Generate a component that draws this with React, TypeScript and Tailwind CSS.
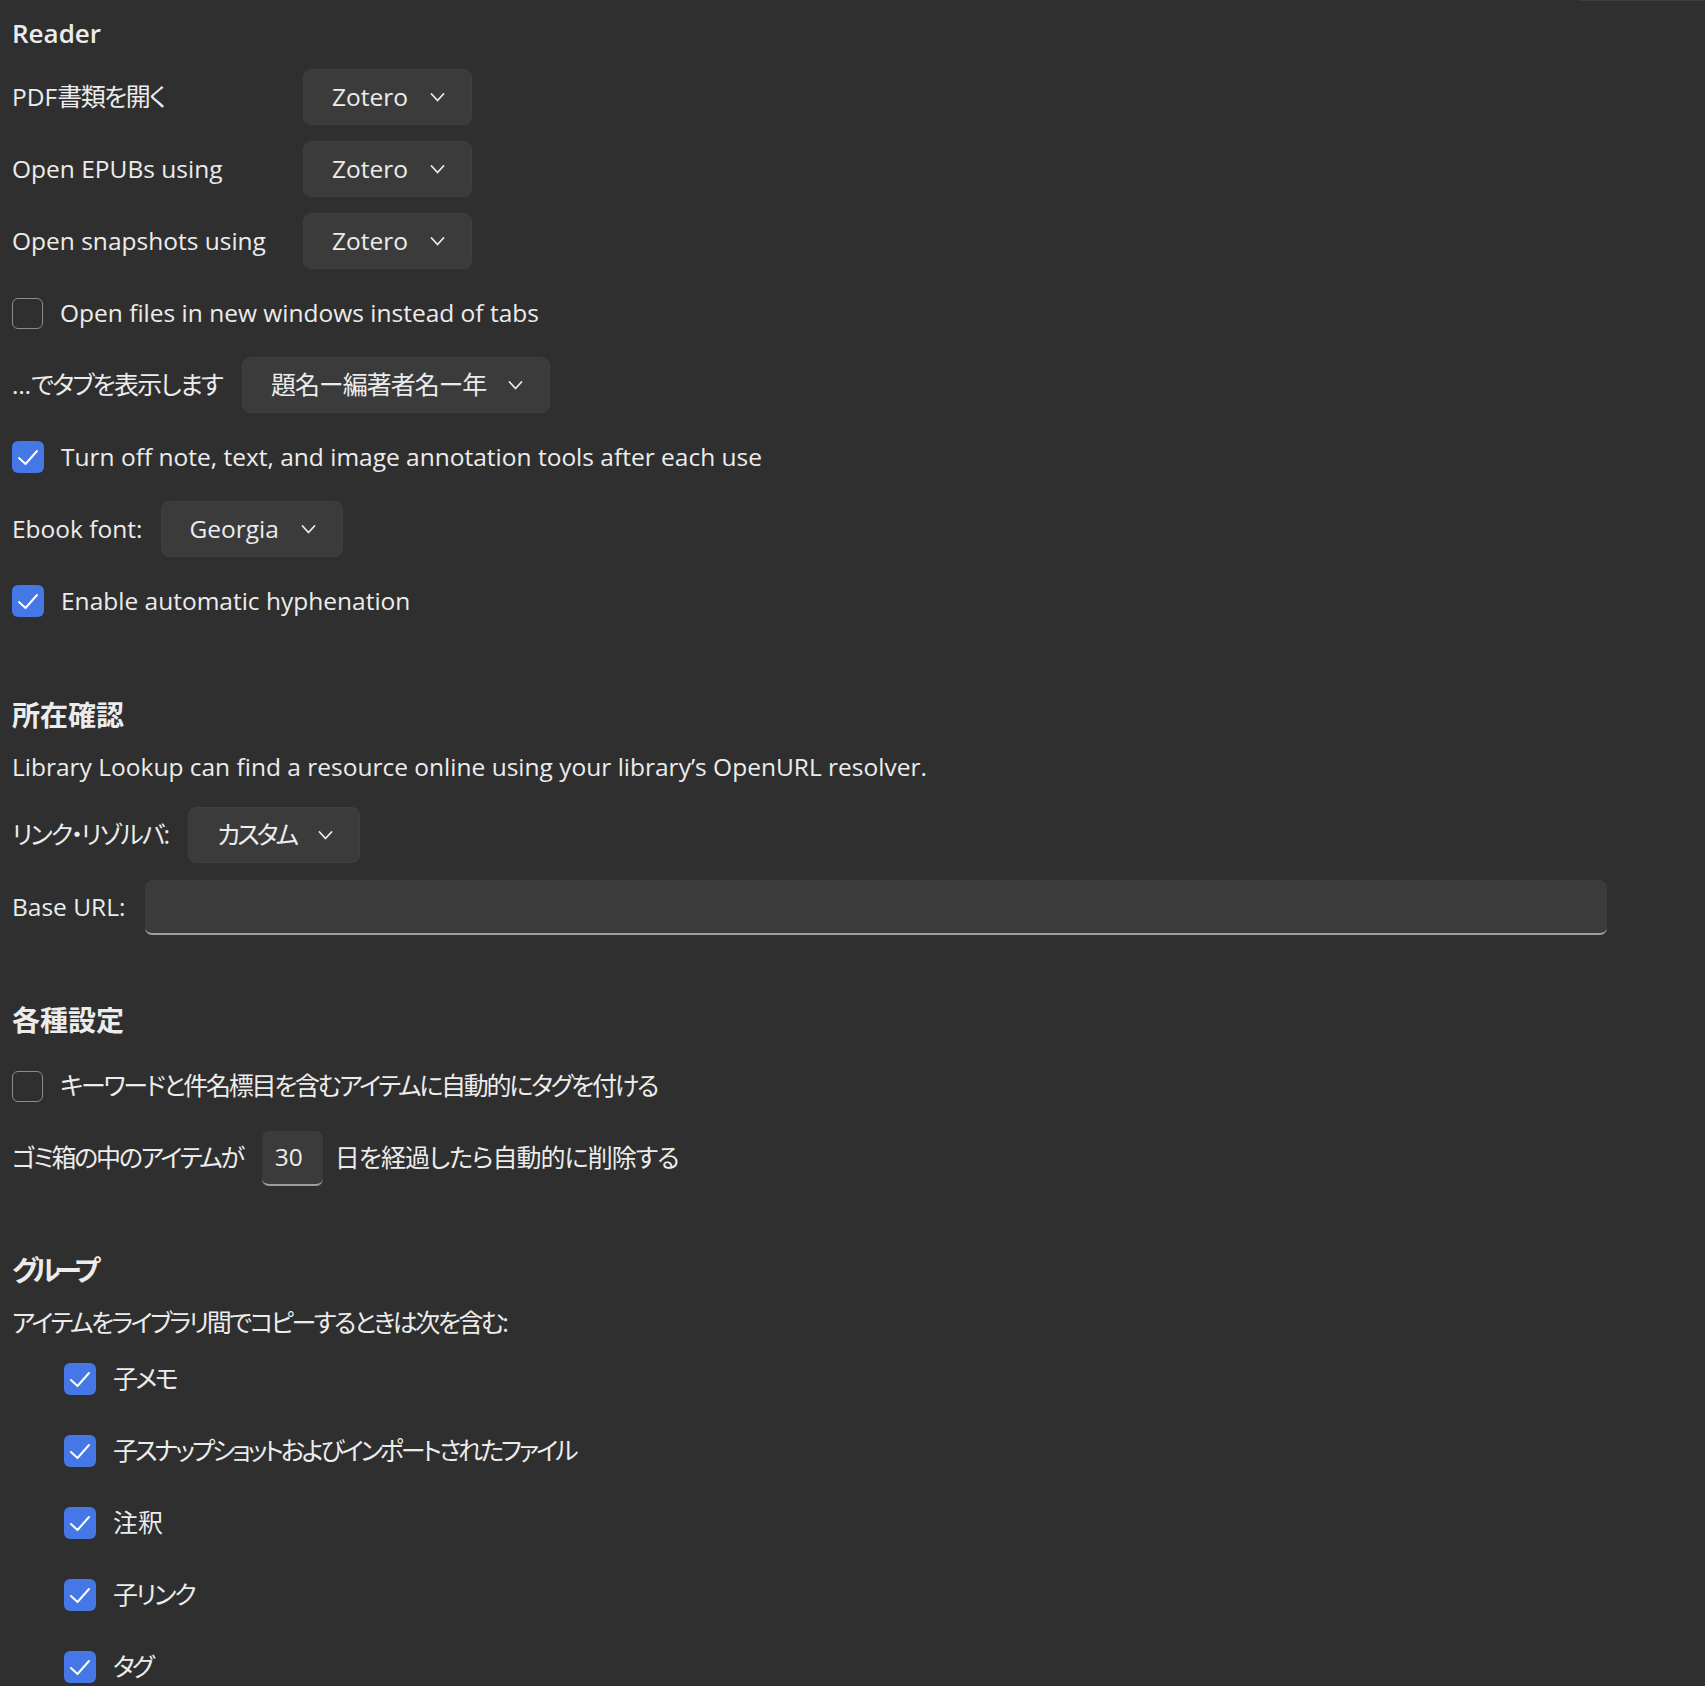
import React from "react";

// Japanese runs: Yu Gothic UI in the original is much narrower than Noto CJK
function J({ children, t = "tracking-[-0.09em]" }: { children: React.ReactNode; t?: string }) {
  return <span className={"text-[25px] " + t}>{children}</span>;
}

function Chevron() {
  return (
    <svg
      width="15"
      height="15"
      viewBox="0 0 15 15"
      fill="none"
      stroke="currentColor"
      strokeWidth="1.8"
      strokeLinecap="round"
      strokeLinejoin="round"
      className="shrink-0"
    >
      <path d="M1.5 4L7.5 10.5L13.5 4" />
    </svg>
  );
}

function Menu({ children }: { children: React.ReactNode }) {
  return (
    <div className="h-[56px] flex items-center gap-[22px] pl-[28px] pr-[26px] rounded-[8px] bg-[#3b3b3b] border border-[#3f3f3f] w-fit">
      <span>{children}</span>
      <Chevron />
    </div>
  );
}

function Check({ on }: { on: boolean }) {
  if (!on)
    return (
      <span className="w-[31px] h-[31px] rounded-[6px] border-[1.5px] border-[#8c8c8c] shrink-0" />
    );
  return (
    <span className="w-[32px] h-[32px] rounded-[6px] bg-[#4677e6] flex items-center justify-center shrink-0">
      <svg
        width="32"
        height="32"
        viewBox="0 0 32 32"
        fill="none"
        stroke="#ffffff"
        strokeWidth="2"
        strokeLinecap="round"
        strokeLinejoin="round"
      >
        <path d="M7 17L13.5 23L25 10" />
      </svg>
    </span>
  );
}

function CheckRow({ on, children }: { on: boolean; children: React.ReactNode }) {
  return (
    <div className="h-[56px] flex items-center gap-[17px]">
      <Check on={on} />
      <span>{children}</span>
    </div>
  );
}

function Heading({ children, className = "" }: { children: React.ReactNode; className?: string }) {
  return (
    <div className={"h-[36px] leading-[36px] font-semibold " + className}>
      {children}
    </div>
  );
}

export default function App() {
  return (
    <div className="relative min-h-screen w-full bg-[#2f2f2f] text-[#ececec] text-[24.5px] font-['Open_Sans','Noto_Sans_CJK_JP',sans-serif] [font-feature-settings:'palt'] pl-[12px] pt-[15px]">
      <div className="absolute top-0 right-0 w-[126px] h-px bg-[#3d3d3d]" />

      <Heading className="text-[26px]">Reader</Heading>
      <div className="mt-[18px] flex flex-col gap-[16px]">
        <div className="grid grid-cols-[291px_auto] gap-y-[16px] items-center">
          <span>
            PDF<J t="tracking-[-0.06em]">書類を開く</J>
          </span>
          <Menu>Zotero</Menu>
          <span>Open EPUBs using</span>
          <Menu>Zotero</Menu>
          <span>Open snapshots using</span>
          <Menu>Zotero</Menu>
        </div>
        <CheckRow on={false}>Open files in new windows instead of tabs</CheckRow>
        <div className="h-[56px] flex items-center gap-[20px]">
          <span>
            …<J t="tracking-[-0.07em]">でタブを表示します</J>
          </span>
          <Menu>
            <J t="tracking-[-0.04em]">題名ー編著者名ー年</J>
          </Menu>
        </div>
        <CheckRow on={true}>Turn off note, text, and image annotation tools after each use</CheckRow>
        <div className="h-[56px] flex items-center gap-[18px]">
          <span>Ebook font:</span>
          <Menu>Georgia</Menu>
        </div>
        <CheckRow on={true}>Enable automatic hyphenation</CheckRow>
      </div>

      <Heading className="mt-[68px] text-[28px]">所在確認</Heading>
      <div className="mt-[16px] h-[36px] leading-[36px]">
        Library Lookup can find a resource online using your library’s OpenURL resolver.
      </div>
      <div className="mt-[22px] h-[56px] flex items-center gap-[20px]">
        <span>
          <J t="tracking-[-0.08em]">リンク・リゾルバ:</J>
        </span>
        <Menu>
          <J t="tracking-[-0.12em]">カスタム</J>
        </Menu>
      </div>
      <div className="mt-[16px] h-[56px] flex items-center gap-[20px]">
        <span>Base URL:</span>
        <div className="w-[1462px] h-[55px] rounded-[7px] bg-[#3b3b3b] border-b-2 border-[#9d9d9d]" />
      </div>

      <Heading className="mt-[67px] text-[28px]">各種設定</Heading>
      <div className="mt-[20px]">
        <CheckRow on={false}>
          <J>キーワードと件名標目を含むアイテムに自動的にタグを付ける</J>
        </CheckRow>
      </div>
      <div className="mt-[16px] h-[56px] flex items-center">
        <J>ゴミ箱の中のアイテムが</J>
        <div className="ml-[19px] w-[61px] h-[55px] rounded-[7px] bg-[#3b3b3b] border-b-2 border-[#9d9d9d] flex items-center pl-[13px]">
          30
        </div>
        <span className="ml-[12px]">
          <J t="tracking-[-0.04em]">日を経過したら自動的に削除する</J>
        </span>
      </div>

      <Heading className="mt-[66px] text-[28px] tracking-[-0.2em]">グループ</Heading>
      <div className="mt-[16px] h-[36px] leading-[36px]">
        <J t="tracking-[-0.1em]">アイテムをライブラリ間でコピーするときは次を含む:</J>
      </div>
      <div className="mt-[11px] pl-[52px] flex flex-col gap-[16px]">
        <CheckRow on={true}>
          <J t="tracking-[-0.1em]">子メモ</J>
        </CheckRow>
        <CheckRow on={true}>
          <J t="tracking-[-0.12em]">子スナップショットおよびインポートされたファイル</J>
        </CheckRow>
        <CheckRow on={true}>
          <J t="tracking-[0em]">注釈</J>
        </CheckRow>
        <CheckRow on={true}>
          <J t="tracking-[-0.085em]">子リンク</J>
        </CheckRow>
        <CheckRow on={true}>
          <J t="tracking-[-0.12em]">タグ</J>
        </CheckRow>
      </div>
    </div>
  );
}
